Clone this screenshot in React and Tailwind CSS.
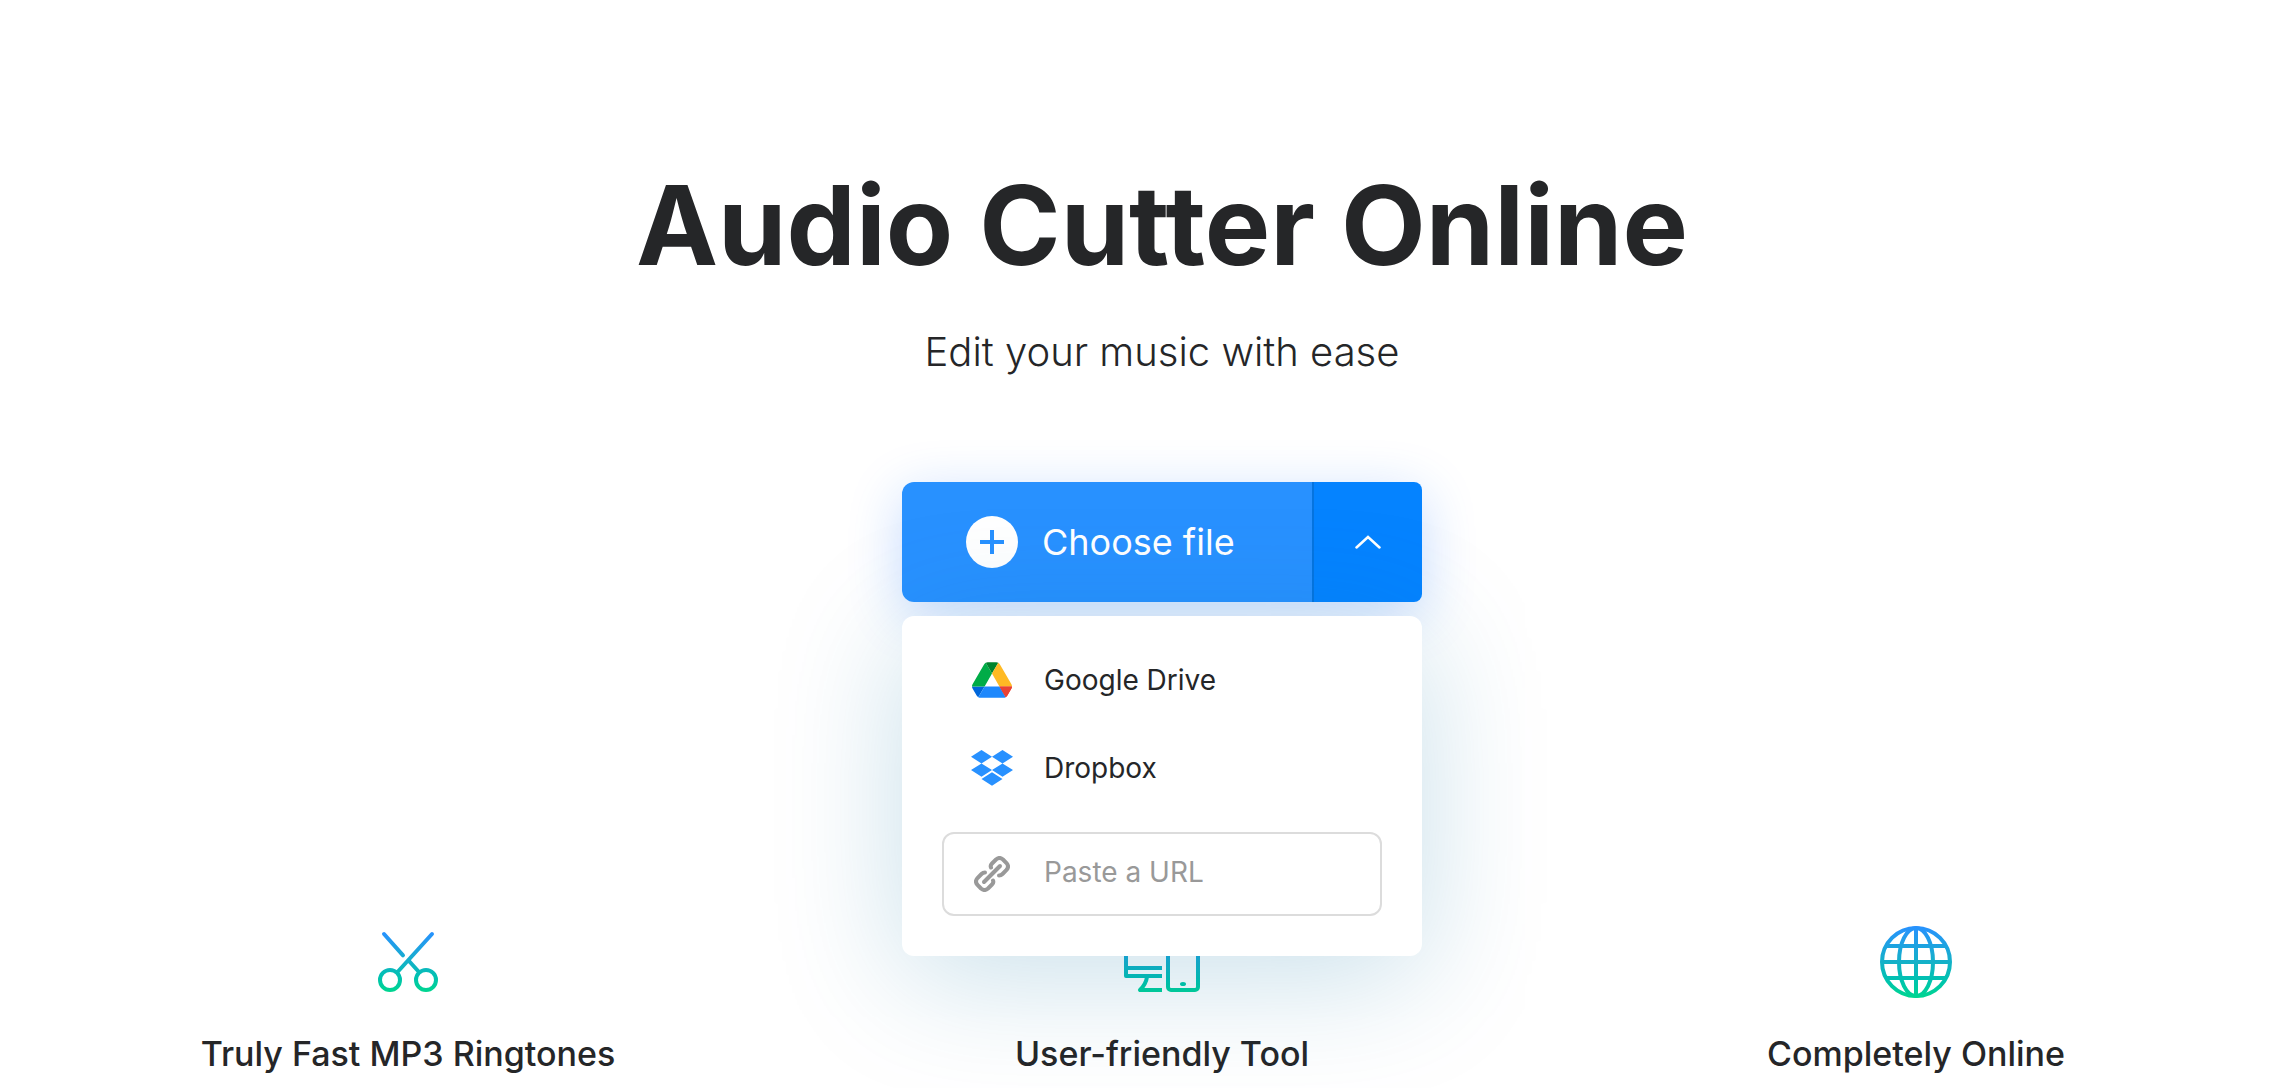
import { useState } from "react";

const iconGradient = (id, y1, y2) => (
  <linearGradient id={id} gradientUnits="userSpaceOnUse" x1="40" y1={y1} x2="40" y2={y2}>
    <stop offset="0" stopColor="#2891FF" />
    <stop offset="0.5" stopColor="#14B1C8" />
    <stop offset="0.75" stopColor="#00C2B0" />
    <stop offset="1" stopColor="#00D68F" />
  </linearGradient>
);

function ScissorsIcon() {
  return (
    <svg viewBox="0 0 80 80" className="size-20" fill="none" stroke="url(#g-scissors)" strokeWidth="4" strokeLinecap="round" aria-hidden="true">
      <defs>{iconGradient("g-scissors", 10, 70)}</defs>
      <path d="M16 12 35 33.300M64 12 30 49.500M41 39 50.500 49.500" />
      <circle cx="22" cy="58" r="10" />
      <circle cx="58" cy="58" r="10" />
    </svg>
  );
}

function DevicesIcon() {
  return (
    <svg viewBox="0 0 80 80" className="size-20" fill="none" stroke="url(#g-devices)" strokeWidth="4" aria-hidden="true">
      <defs>{iconGradient("g-devices", 10, 74)}</defs>
      <path d="M66 20V12H4V54H40M4 46H40" strokeLinejoin="round" />
      <path d="M25 55Q24 62 18 68H40" strokeLinejoin="round" />
      <rect x="46" y="24" width="30" height="44" rx="3" />
      <ellipse cx="61" cy="62" rx="3" ry="2" fill="url(#g-devices)" stroke="none" />
    </svg>
  );
}

function GlobeIcon() {
  return (
    <svg viewBox="0 0 80 80" className="size-20" fill="none" stroke="url(#g-globe)" strokeWidth="4" aria-hidden="true">
      <defs>{iconGradient("g-globe", 4, 76)}</defs>
      <circle cx="40" cy="40" r="34" />
      <ellipse cx="40" cy="40" rx="17" ry="34" />
      <path d="M40 6V74M6 40.010H74M11 24.010H69M11 56.010H69" />
    </svg>
  );
}

function DriveIcon() {
  return (
    <svg viewBox="0 0 87.300 78" className="h-9 w-10" aria-hidden="true">
      <path fill="#0066DA" d="m6.600 66.850 3.850 6.650c.8 1.400 1.950 2.500 3.300 3.300l13.750-23.800h-27.500c0 1.550.4 3.100 1.200 4.500z" />
      <path fill="#00AC47" d="m43.650 25-13.750-23.800c-1.350.8-2.500 1.900-3.300 3.300l-25.400 44a9.060 9.060 0 0 0-1.200 4.500h27.500z" />
      <path fill="#EA4335" d="m73.550 76.800c1.350-.8 2.500-1.900 3.300-3.300l1.600-2.750 7.650-13.250c.8-1.400 1.200-2.950 1.200-4.500h-27.502l5.852 11.500z" />
      <path fill="#00832D" d="m43.650 25 13.750-23.800c-1.350-.8-2.900-1.200-4.500-1.200h-18.500c-1.600 0-3.150.45-4.500 1.200z" />
      <path fill="#1E88FC" d="m59.800 53h-32.300l-13.750 23.800c1.350.8 2.900 1.200 4.500 1.200h50.800c1.600 0 3.150-.45 4.500-1.200z" />
      <path fill="#FFBA24" d="m73.400 26.500-12.700-22c-.8-1.400-1.950-2.500-3.300-3.300l-13.750 23.800 16.150 28h27.450c0-1.550-.4-3.100-1.200-4.500z" />
      <path fill="#EA4335" d="M59.800 53H87.300C87.300 54.550 86.900 56.100 86.100 57.500L76.850 73.500C76.050 74.900 74.900 76 73.550 76.800z" />
    </svg>
  );
}

function DropboxIcon() {
  return (
    <svg viewBox="0 0 42 36" className="h-9 w-[42px]" fill="#2891FF" aria-hidden="true">
      <path d="M10.500 0 21 6.700 10.500 13.400 0 6.700zM31.500 0 42 6.700 31.500 13.400 21 6.700zM10.500 13.400 21 20.100 10.500 26.800 0 20.100zM31.500 13.400 42 20.100 31.500 26.800 21 20.100zM21 22.300 31.500 29 21 35.700 10.500 29z" />
    </svg>
  );
}

function LinkIcon() {
  return (
    <svg viewBox="0 0 36 36" className="size-9" fill="none" stroke="#999" strokeWidth="4" strokeLinecap="round" aria-hidden="true">
      <path d="M10 26 26 10" />
      <path d="M17 11.500Q16 9.500 18 7.500L22 3.500Q25.500 .5 29 3.500L32.500 7Q35.500 10.500 32.500 14L28.500 18Q27 19.500 25 19.500" />
      <path d="M19 24.500Q20 26.500 18 28.500L14 32.500Q10.500 35.500 7 32.500L3.500 29Q.5 25.500 3.500 22L7.500 18Q9 16.500 11 16.500" />
    </svg>
  );
}

const sources = [
  { name: "Google Drive", Icon: DriveIcon },
  { name: "Dropbox", Icon: DropboxIcon },
];

const features = [
  { title: "Truly Fast MP3 Ringtones", Icon: ScissorsIcon },
  { title: "User-friendly Tool", Icon: DevicesIcon },
  { title: "Completely Online", Icon: GlobeIcon },
];

function FilePicker() {
  const [open, setOpen] = useState(true);
  const [url, setUrl] = useState("");
  return (
    <div className="relative mt-[105px] w-[520px]">
      <div className="flex h-[120px] rounded-xl shadow-[0_12px_54px_rgba(20,110,255,0.24)]">
        <button type="button" className="flex flex-1 items-center gap-6 rounded-l-xl bg-[#2891ff] pl-16 text-4xl text-white">
          <svg viewBox="0 0 52 52" className="size-[52px]" aria-hidden="true">
            <circle cx="26" cy="26" r="26" fill="#fff" />
            <path d="M26 14V38M14 26H38" stroke="#2891ff" strokeWidth="4" />
          </svg>
          Choose file
        </button>
        <button
          type="button"
          aria-label="More sources"
          aria-expanded={open}
          onClick={() => setOpen(!open)}
          className="flex w-[110px] items-center justify-center rounded-r-lg border-l-2 border-[#0674df] bg-[#0583ff]"
        >
          <svg viewBox="0 0 26 14" className="h-3.5 w-[26px]" fill="none" stroke="#fff" strokeWidth="2.500" strokeLinecap="round" aria-hidden="true">
            <path d="M1.500 12.500 13 2 24.500 12.500" />
          </svg>
        </button>
      </div>
      {open && (
        <div className="absolute inset-x-0 top-full z-10 mt-3.5 rounded-xl bg-white px-10 pt-5 pb-10 text-[28px] leading-10 shadow-[0_20px_128px_rgba(0,110,160,0.22)]">
          {sources.map(({ name, Icon }) => (
            <button key={name} type="button" className="flex h-[88px] w-full items-center gap-[31px] pl-[29px]">
              <span className="flex w-[42px] justify-center">
                <Icon />
              </span>
              {name}
            </button>
          ))}
          <label className="mt-5 flex h-[84px] items-center gap-[31px] rounded-xl border-2 border-[#dcdcdc] pr-4 pl-[27px]">
            <span className="flex w-[42px] justify-center">
              <LinkIcon />
            </span>
            <input
              type="url"
              aria-label="Paste a URL"
              placeholder="Paste a URL"
              value={url}
              onChange={(e) => setUrl(e.target.value)}
              className="min-w-0 flex-1 pb-1 outline-none placeholder:text-[#999]"
            />
          </label>
        </div>
      )}
    </div>
  );
}

export default function App() {
  return (
    <main className="flex min-h-screen flex-col items-center bg-white pt-[155px] pl-[52px] font-['Inter',sans-serif] text-[#252628]">
      <h1 className="text-center text-[110px] leading-[140px] font-bold">Audio Cutter Online</h1>
      <p className="mt-8 text-center text-[40px] leading-[50px] font-light">Edit your music with ease</p>
      <FilePicker />
      <section className="mt-80 grid w-full grid-cols-3 gap-[42px]">
        {features.map(({ title, Icon }) => (
          <article key={title} className="flex flex-col items-center">
            <Icon />
            <h2 className="mt-7 text-center text-[34px] leading-[48px] font-medium">{title}</h2>
          </article>
        ))}
      </section>
    </main>
  );
}
